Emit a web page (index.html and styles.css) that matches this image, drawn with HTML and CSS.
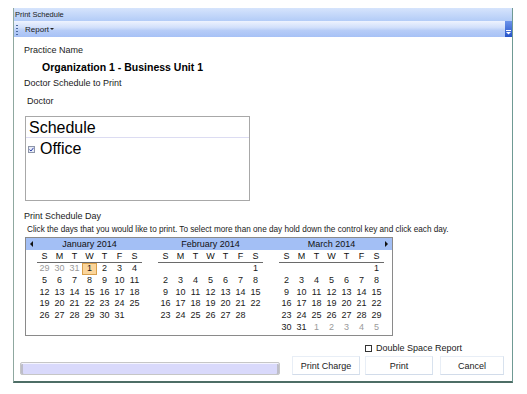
FILE: index.html
```html
<!DOCTYPE html>
<html lang="en">
<head>
    <meta charset="UTF-8">
    <meta name="viewport" content="width=device-width, initial-scale=1.0">
    <title>Print Schedule</title>
    <link rel="stylesheet" href="styles.css">
</head>
<body>
    <div class="window">
        <div class="titlebar">Print Schedule</div>
        <div class="toolbar">
            <span class="grip"></span>
            <span class="menu">Report<span class="caret"></span></span>
            <span class="overflow">
                <svg width="5" height="5" viewBox="0 0 5 5"><rect x="0" y="0" width="5" height="1" fill="#fff"/><path d="M0 2 L5 2 L2.5 4.5 Z" fill="#fff"/></svg>
            </span>
        </div>

        <div class="content">
            <div class="label">Practice Name</div>
            <div class="org">Organization 1 - Business Unit 1</div>
            <div class="label gap-s">Doctor Schedule to Print</div>
            <div class="label doctor">Doctor</div>

            <div class="listbox">
                <div class="list-head">Schedule</div>
                <div class="list-item">
                    <span class="check">
                        <svg width="5" height="5" viewBox="0 0 5 5"><path d="M0.5 2.6 L2 4 L4.5 0.8" fill="none" stroke="#2b3fa8" stroke-width="1"/></svg>
                    </span>
                    Office
                </div>
            </div>

            <div class="label day-title">Print Schedule Day</div>
            <div class="hint">Click the days that you would like to print. To select more than one day hold down the control key and click each day.</div>

            <div class="calendar">
                <div class="cal-head">
                    <span class="nav nav-prev"><span class="tri-left"></span></span>
                    <span class="month-title">January 2014</span>
                    <span class="month-title">February 2014</span>
                    <span class="month-title">March 2014</span>
                    <span class="nav nav-next"><span class="tri-right"></span></span>
                </div>
                <div class="cal-body">
                    <div class="month">
                        <div class="dow"><span>S</span><span>M</span><span>T</span><span>W</span><span>T</span><span>F</span><span>S</span></div>
                        <div class="days" id="m0"></div>
                    </div>
                    <div class="month">
                        <div class="dow"><span>S</span><span>M</span><span>T</span><span>W</span><span>T</span><span>F</span><span>S</span></div>
                        <div class="days" id="m1"></div>
                    </div>
                    <div class="month">
                        <div class="dow"><span>S</span><span>M</span><span>T</span><span>W</span><span>T</span><span>F</span><span>S</span></div>
                        <div class="days" id="m2"></div>
                    </div>
                </div>
            </div>

            <div class="options">
                <span class="box"></span>
                <span>Double Space Report</span>
            </div>

            <div class="footer">
                <div class="progress"></div>
                <button class="btn btn-charge">Print Charge</button>
                <button class="btn btn-print">Print</button>
                <button class="btn btn-cancel">Cancel</button>
            </div>
        </div>
    </div>

    <script>
        function buildMonth(id, year, month, showPrev, showNext) {
            const grid = document.getElementById(id);
            const first = new Date(year, month, 1).getDay();
            const total = new Date(year, month + 1, 0).getDate();
            const prevTotal = new Date(year, month, 0).getDate();
            const cells = [];

            for (let i = 0; i < first; i++) {
                cells.push(showPrev ? { n: prevTotal - first + 1 + i, other: true } : null);
            }
            for (let d = 1; d <= total; d++) {
                cells.push({ n: d, sel: month === 0 && d === 1 });
            }
            if (showNext) {
                let n = 1;
                while (cells.length % 7 !== 0) cells.push({ n: n++, other: true });
            }

            cells.forEach(c => {
                const span = document.createElement("span");
                if (c) {
                    span.textContent = c.n;
                    if (c.other) span.classList.add("other");
                    if (c.sel) span.classList.add("sel");
                }
                grid.appendChild(span);
            });
        }

        buildMonth("m0", 2014, 0, true, false);
        buildMonth("m1", 2014, 1, false, false);
        buildMonth("m2", 2014, 2, false, true);
    </script>
</body>
</html>
```

FILE: styles.css
```css
body {
    margin: 0;
    background: #fff;
    font-family: "Liberation Sans", Arial, sans-serif;
    color: #1a1a1a;
}
.window {
    margin: 8px 0 0 13px;
    width: 500px;
    height: 375px;
    box-sizing: border-box;
    border-left: 1px solid #8fa8a0;
    border-right: 1px solid #6f9a94;
    border-bottom: 2px solid #4e6e66;
    display: flex;
    flex-direction: column;
}
.titlebar {
    height: 13px;
    line-height: 13px;
    font-size: 7.5px;
    padding-left: 1px;
    background: linear-gradient(#d6e4fc, #b3ccf7);
}
.toolbar {
    height: 16px;
    display: flex;
    align-items: center;
    background: linear-gradient(#eef3fe 0%, #d2e0fb 40%, #b6ccf7 60%, #a6c1f6 100%);
}
.grip {
    width: 2px;
    height: 11px;
    margin-left: 2px;
    background: radial-gradient(circle, #4a6aa0 0.8px, transparent 1px) 0 0 / 2px 3px;
}
.menu {
    margin-left: 7px;
    font-size: 8px;
    display: flex;
    align-items: center;
}
.caret {
    margin-left: 1px;
    border-left: 2px solid transparent;
    border-right: 2px solid transparent;
    border-top: 2px solid #222;
}
.overflow {
    margin-left: auto;
    width: 7px;
    align-self: stretch;
    background: linear-gradient(#6b93ea, #2352c9);
    display: flex;
    align-items: flex-end;
    justify-content: center;
    padding-bottom: 2px;
    box-sizing: border-box;
}

.content {
    flex: 1;
    padding: 7px 0 0 10px;
    display: flex;
    flex-direction: column;
}
.label {
    font-size: 9px;
    line-height: 12px;
}
.org {
    margin: 4px 0 0 18px;
    font-size: 10.5px;
    line-height: 14px;
    font-weight: bold;
    color: #000;
}
.gap-s {
    margin-top: 3px;
}
.doctor {
    margin: 6px 0 0 3px;
}

.listbox {
    margin: 9px 0 0 1px;
    width: 225px;
    height: 85px;
    box-sizing: border-box;
    border: 1px solid #a8a8a8;
}
.list-head {
    padding: 2px 0 0 3px;
    font-size: 16px;
    line-height: 18px;
    color: #000;
    border-bottom: 1px solid #dcdcf2;
}
.list-item {
    margin-top: 2px;
    padding-left: 2px;
    display: flex;
    align-items: center;
    gap: 5px;
    font-size: 16px;
    line-height: 18px;
    color: #000;
}
.check {
    width: 7px;
    height: 7px;
    box-sizing: border-box;
    border: 1px solid #8e96a8;
    background: #e8ecf8;
    display: flex;
    align-items: center;
    justify-content: center;
}

.day-title {
    margin-top: 9px;
}
.hint {
    margin: 3px 0 0 3px;
    font-size: 8.2px;
    line-height: 10px;
    white-space: nowrap;
}

.calendar {
    margin: 2px 0 0 1px;
    width: 368px;
    height: 99px;
    box-sizing: border-box;
    border: 1px solid #8a8a8a;
    font-size: 9px;
}
.cal-head {
    height: 12px;
    display: flex;
    align-items: center;
    background: #a3bff5;
}
.nav {
    width: 11px;
    display: flex;
    justify-content: center;
}
.nav-next {
    width: auto;
    margin-left: 1px;
}
.tri-left {
    border-top: 3px solid transparent;
    border-bottom: 3px solid transparent;
    border-right: 3px solid #111;
}
.tri-right {
    border-top: 3px solid transparent;
    border-bottom: 3px solid transparent;
    border-left: 3px solid #111;
}
.month-title {
    width: 105px;
    text-align: center;
    line-height: 12px;
    color: #111;
}
.month-title + .month-title {
    margin-left: 16px;
}
.cal-body {
    display: flex;
    padding-left: 11px;
}
.month {
    width: 105px;
}
.month + .month {
    margin-left: 16px;
}
.dow {
    display: grid;
    grid-template-columns: repeat(7, 15px);
    height: 12px;
    line-height: 13px;
    border-bottom: 1px solid #6a6a6a;
    text-align: center;
    color: #111;
}
.days {
    display: grid;
    grid-template-columns: repeat(7, 15px);
    grid-auto-rows: 11.8px;
    line-height: 11.8px;
    text-align: center;
    color: #1a1a1a;
}
.days .other {
    color: #9a9a9a;
}
.days .sel {
    background: #fbd59a;
    box-shadow: inset 0 0 0 1px #d9a04c;
}

.options {
    margin-top: 6px;
    padding-right: 50px;
    display: flex;
    justify-content: flex-end;
    align-items: center;
    gap: 4px;
    font-size: 9px;
    line-height: 12px;
}
.box {
    width: 7px;
    height: 7px;
    box-sizing: border-box;
    border: 1px solid #333;
    background: #fff;
}

.footer {
    margin: 2px 0 0 -4px;
    display: flex;
    align-items: flex-start;
}
.progress {
    margin-top: 6px;
    width: 260px;
    height: 13px;
    box-sizing: border-box;
    border: 1px solid #c6c6c6;
    border-radius: 2px;
    background: #d9d9fb;
    box-shadow: inset 0 1px 0 #f4f4ff, inset 2px 0 0 #bdbdc8, inset -2px 0 0 #bdbdc8;
}
.btn {
    height: 19px;
    padding: 0;
    background: #fff;
    border: 1px solid #e8eef6;
    border-bottom-color: #d2dcea;
    border-right-color: #d8e2ee;
    font-family: "Liberation Sans", Arial, sans-serif;
    font-size: 9px;
    color: #222;
}
.btn-charge {
    margin-left: 12px;
    width: 68px;
}
.btn-print {
    margin-left: 5px;
    width: 68px;
}
.btn-cancel {
    margin-left: 7px;
    width: 64px;
}
```
